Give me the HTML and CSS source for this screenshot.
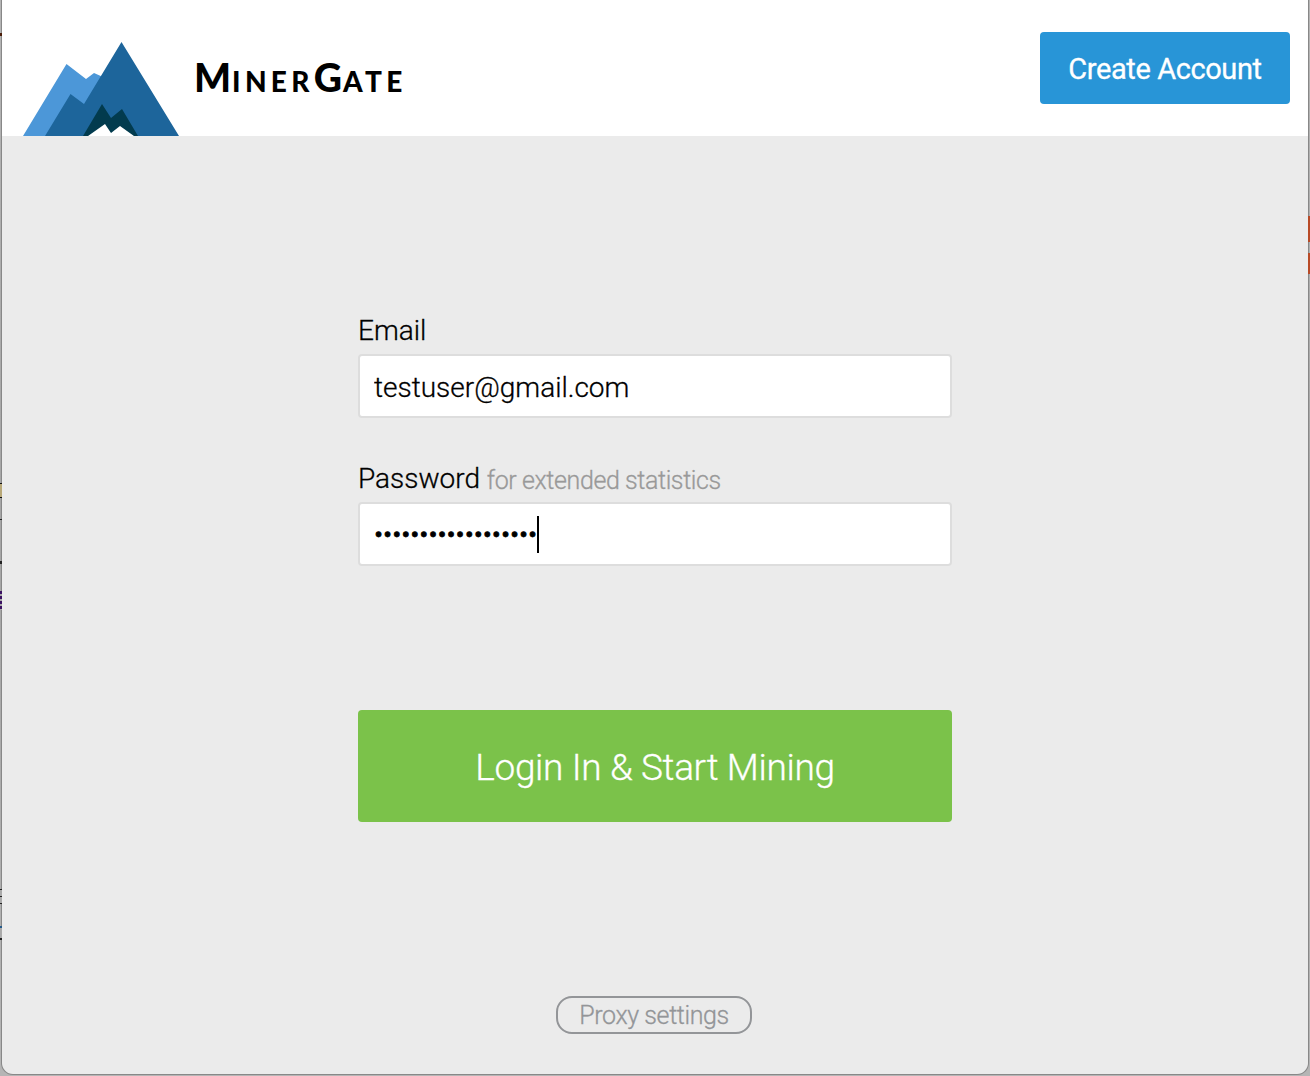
FILE: index.html
```html
<!DOCTYPE html>
<html lang="en">
<head>
    <meta charset="UTF-8">
    <meta name="viewport" content="width=device-width, initial-scale=1.0">
    <title>MinerGate</title>
    <link rel="stylesheet" href="styles.css">
</head>
<body>
    <div class="window">
        <header class="header">
            <svg class="logo" width="158" height="95" viewBox="0 0 158 95">
                <path fill="#4c97d8" d="M0 95 43.500 23 63 38 71 32 80 36 70 95z"/>
                <path fill="#1d659b" d="M22 95 47.500 53 61 63 98.500 1 156 95z"/>
                <path fill="#023b4e" d="M60 95 79 63 88 77 99 68 115 95z"/>
                <path fill="#fff" d="M65 95 82 83 88 92 97 85 111 95z"/>
            </svg>
            <div class="brand"><span class="big">M</span>INER<span class="big">G</span>ATE</div>
            <button class="create-button">Create Account</button>
        </header>

        <form class="login-form">
            <label class="label" for="email">Email</label>
            <input class="field" type="text" id="email" value="testuser@gmail.com">

            <label class="label label-password">Password <span class="hint">for extended statistics</span></label>
            <div class="field password"><span class="dots">••••••••••••••••••</span><span class="caret"></span></div>

            <button class="login-button" type="button">Login In &amp; Start Mining</button>
        </form>

        <button class="proxy-button">Proxy settings</button>
    </div>

    <!-- what shows past the window edges -->
    <span class="peek peek-red"></span>
    <span class="peek peek-red peek-red-low"></span>
    <span class="peek peek-top"></span>
    <span class="peek peek-gold"></span>
    <span class="peek peek-line"></span>
    <span class="peek peek-dash"></span>
    <span class="peek peek-purple"></span>
    <span class="peek peek-mark"></span>
    <span class="peek peek-blue"></span>
</body>
</html>
```
FILE: styles.css
```css
* {
    box-sizing: border-box;
}
body {
    margin: 0;
    padding: 0 2px 2px;
    height: 1076px;
    overflow: hidden;
    background: linear-gradient(#b5b5b5, #a5a5a5 50%, #b5b5b5);
    font-family: Roboto, sans-serif;
    font-weight: 300;
    color: #000;
}
button {
    font-family: inherit;
    padding: 0;
    border: none;
}
.window {
    display: flex;
    flex-direction: column;
    align-items: center;
    height: 1074px;
    background-color: #ebebeb;
    border-radius: 0 0 11px 11px;
    box-shadow: 0 0 0 1px #888;
    overflow: hidden;
}
.header {
    display: flex;
    align-items: flex-start;
    width: 100%;
    height: 136px;
    padding: 0 18px 0 21px;
    background-color: #fff;
}
.logo {
    margin-top: 41px;
}
.brand {
    margin: 53px 0 0 13px;
    font-family: Lato, sans-serif;
    font-weight: 900;
    font-size: 28px;
    line-height: 48px;
    letter-spacing: 4.3px;
    white-space: nowrap;
}
.brand .big {
    font-size: 39px;
    letter-spacing: 1px;
}
.create-button {
    width: 250px;
    height: 72px;
    margin: 32px 0 0 auto;
    padding-top: 2px;
    background-color: #2895d7;
    border-radius: 4px;
    color: #fff;
    font-size: 29px;
    font-weight: 400;
    letter-spacing: -0.4px;
    -webkit-text-stroke: 0.3px;
}
.login-form {
    display: flex;
    flex-direction: column;
    width: 594px;
    margin-top: 176px;
}
.label {
    height: 42px;
    padding-top: 1px;
    font-size: 28px;
    line-height: 36px;
    -webkit-text-stroke: 0.3px;
}
.label-password {
    margin-top: 42px;
}
.hint {
    position: relative;
    top: 1px;
    color: #999;
    font-size: 25px;
    letter-spacing: -0.4px;
}
.field {
    width: 594px;
    height: 64px;
    padding: 2px 14px 0;
    border: 2px solid #ddd;
    border-radius: 4px;
    background-color: #fff;
    font-family: inherit;
    font-size: 28px;
    font-weight: 300;
    color: #000;
    -webkit-text-stroke: 0.3px;
}
.password {
    display: flex;
    align-items: center;
    padding-top: 0;
}
.dots {
    font-size: 28px;
    -webkit-text-stroke: 0.8px;
}
.caret {
    width: 2px;
    height: 37px;
    background-color: #000;
}
.login-button {
    height: 112px;
    margin-top: 144px;
    padding-top: 3px;
    background-color: #7bc24a;
    border-radius: 4px;
    color: #fff;
    font-size: 37px;
    font-weight: 300;
    letter-spacing: -0.35px;
    -webkit-text-stroke: 0.3px;
}
.proxy-button {
    width: 196px;
    height: 38px;
    margin: 174px 2px 0 0;
    border: 2px solid #939598;
    border-radius: 16px;
    background: none;
    color: #939598;
    font-size: 25px;
    font-weight: 300;
    letter-spacing: -0.4px;
    -webkit-text-stroke: 0.3px;
}
.peek {
    position: absolute;
    left: 0;
    width: 2px;
    height: 2px;
    background-color: #222;
}
.peek-red {
    left: 1308px;
    top: 216px;
    height: 26px;
    background-color: #b84a26;
}
.peek-red-low {
    top: 253px;
    height: 21px;
}
.peek-top {
    top: 33px;
    height: 3px;
    background-color: #4a1c08;
}
.peek-gold {
    top: 483px;
    height: 15px;
    background-color: #b8a878;
    border: solid #111;
    border-width: 1px 0;
}
.peek-line {
    top: 519px;
    height: 1px;
}
.peek-dash {
    top: 561px;
    height: 3px;
}
.peek-purple {
    top: 591px;
    height: 19px;
    background: repeating-linear-gradient(#3b1263 0 3px, #aaa 3px 5px);
}
.peek-mark {
    top: 889px;
    height: 15px;
    background: repeating-linear-gradient(#222 0 1px, #aaa 1px 7px);
}
.peek-blue {
    top: 926px;
    height: 14px;
    background: linear-gradient(#245a8a 2px, #aaa 2px 12px, #222 12px);
}
```
